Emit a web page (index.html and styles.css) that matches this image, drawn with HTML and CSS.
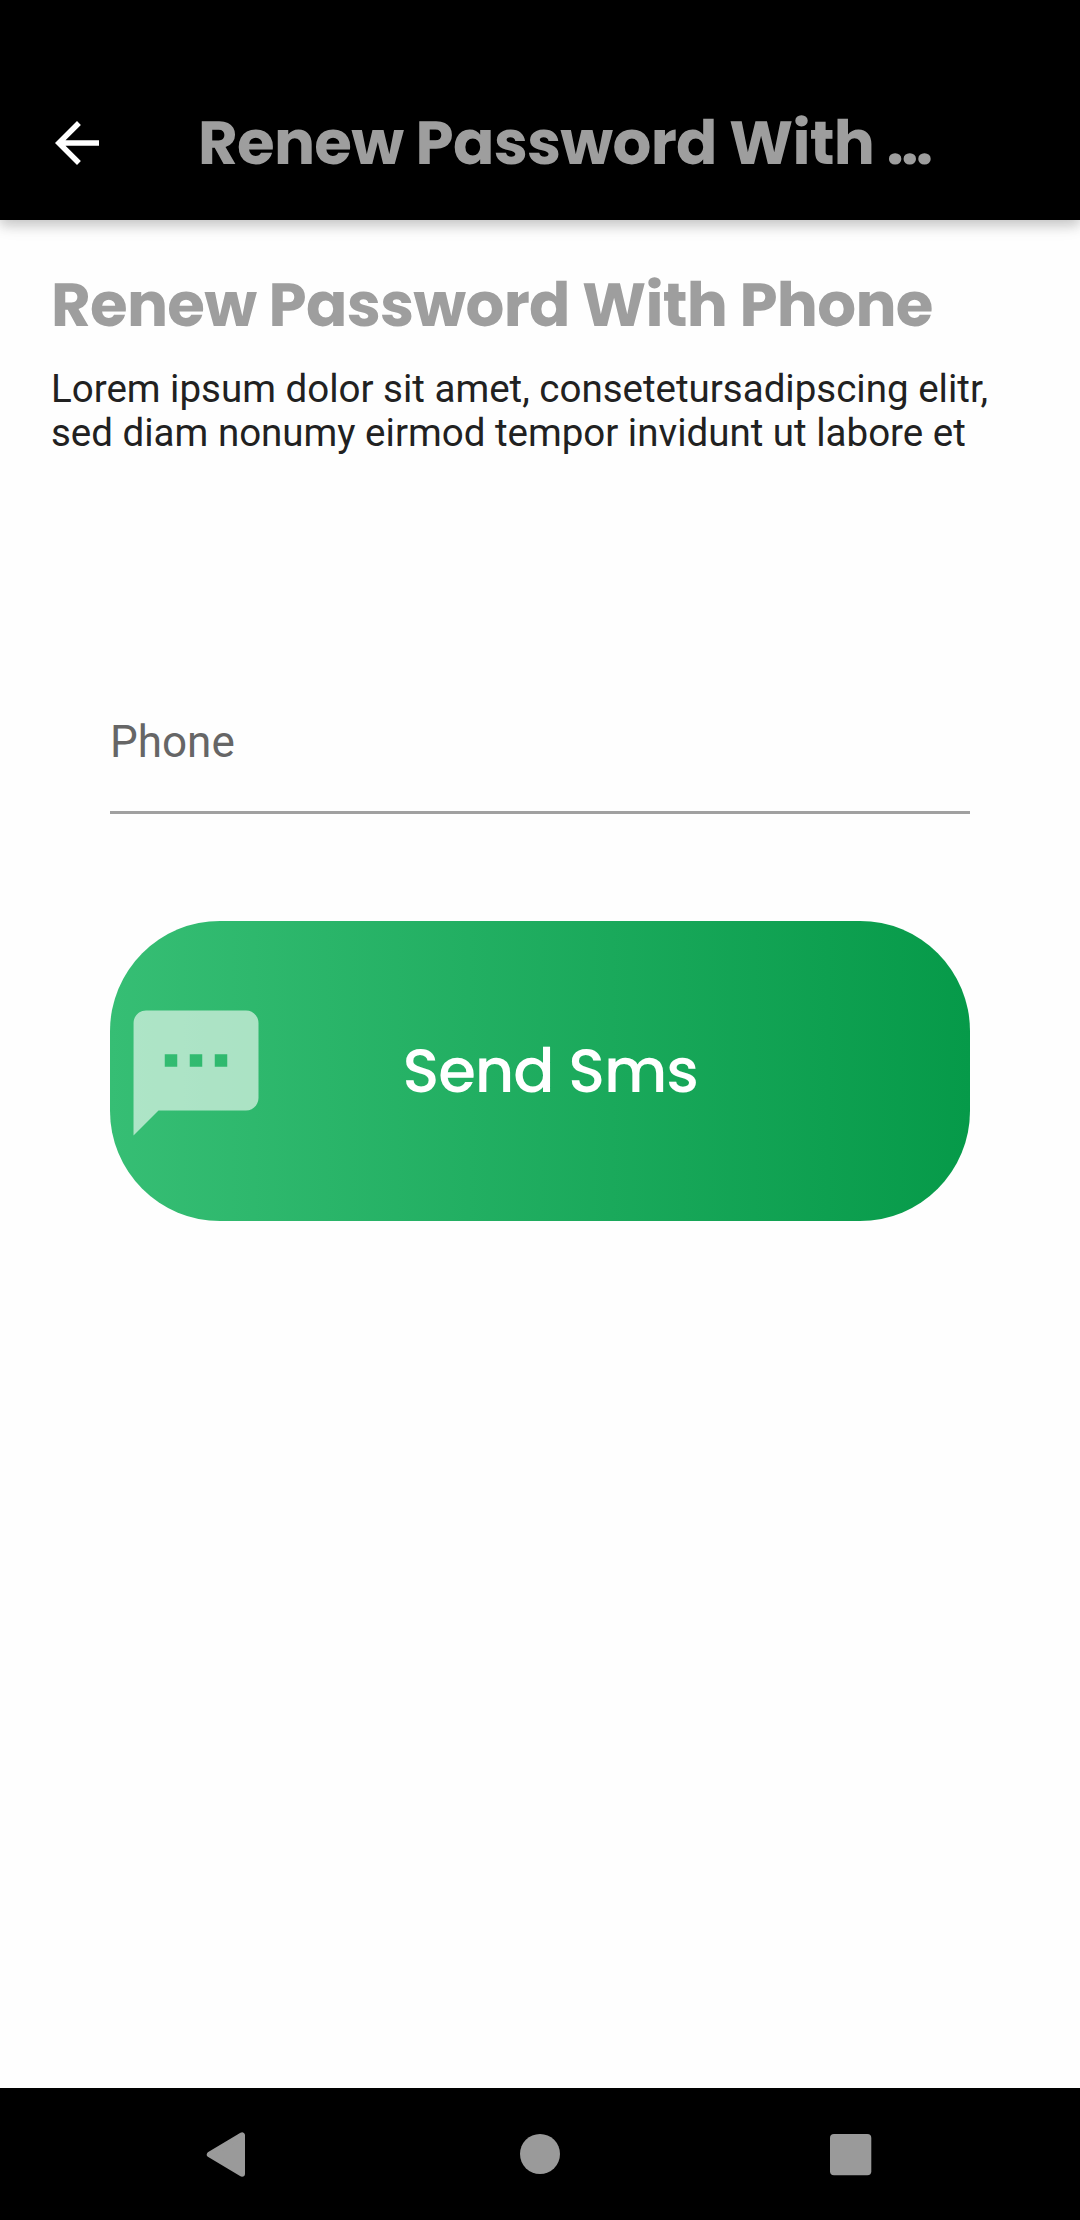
FILE: index.html
```html
<!DOCTYPE html>
<html lang="en">
<head>
<meta charset="utf-8">
<title>Renew Password With Phone</title>
<link rel="stylesheet" href="styles.css">
</head>
<body>
<div class="screen">
  <header class="app-bar">
    <svg class="back" viewBox="0 0 24 24" aria-label="Back"><path d="M20 11H7.83l5.59-5.59L12 4l-8 8 8 8 1.41-1.41L7.83 13H20v-2z"/></svg>
    <div class="bar-title">Renew Password With …</div>
  </header>
  <main class="content">
    <h1 class="heading">Renew Password With Phone</h1>
    <p class="intro">Lorem ipsum dolor sit amet, consetetursadipscing elitr,<br>sed diam nonumy eirmod tempor invidunt ut labore et</p>
    <div class="form">
      <div class="field">Phone</div>
      <div class="send">
        <svg class="sms" viewBox="0 0 24 24"><path d="M20 2H4c-1.1 0-1.99.9-1.99 2L2 22l4-4h14c1.1 0 2-.9 2-2V4c0-1.1-.9-2-2-2zM9 11H7V9h2v2zm4 0h-2V9h2v2zm4 0h-2V9h2v2z"/></svg>
        <span class="send-label">Send Sms</span>
      </div>
    </div>
  </main>
  <nav class="nav-bar">
    <svg class="key" viewBox="0 0 60 60"><path d="M9.8 30.5 42 11.3V49.7Z" stroke-width="6" stroke-linejoin="round"/></svg>
    <svg class="key" viewBox="0 0 60 60"><circle cx="30" cy="30" r="20"/></svg>
    <svg class="key" viewBox="0 0 60 60"><rect x="10" y="10" width="41.3" height="41.3" rx="4"/></svg>
  </nav>
</div>
</body>
</html>
```
FILE: styles.css
```css
* { box-sizing: border-box; }
body { margin: 0; background: #fefefe; font-family: Roboto, sans-serif; }
.screen { display: flex; flex-direction: column; width: 1080px; height: 2220px; overflow: hidden; }
.app-bar {
  display: flex; align-items: center; flex: none; height: 220px;
  padding: 66px 0 0 44px; background: #000;
  box-shadow: 0 6px 11px rgba(0, 0, 0, .16), 0 2px 20px rgba(0, 0, 0, .1);
}
.back { width: 66px; height: 66px; fill: #fff; }
.bar-title, .heading, .send-label {
  font-family: Poppins, Inter, sans-serif; font-size: 61px; line-height: 90px; letter-spacing: -.7px;
  white-space: nowrap; text-rendering: geometricPrecision;
}
.bar-title { margin: 2px 0 0 88px; font-weight: 700; color: #9e9e9e; }
.content { flex: 1; padding: 41px 51px 0; }
.heading { margin: 0; font-weight: 700; color: #9e9e9e; }
.intro { margin: 16px 0 0; font-size: 38.5px; line-height: 44px; color: #212121; white-space: nowrap; }
.form { margin: 260px 59px 0; }
.field { height: 99px; font-size: 44px; line-height: 55px; color: #666; border-bottom: 3px solid #a0a0a0; }
.send {
  display: flex; align-items: center; height: 299.7px; margin-top: 107.3px; padding: 4px 0 0 10.5px;
  border-radius: 110px; background: linear-gradient(90deg, #36be74, #069a49);
}
.sms { width: 150px; height: 150px; fill: #fff; fill-opacity: .6; }
.send-label { margin: -3px 0 0 132px; font-weight: 500; letter-spacing: -1.1px; color: #fff; }
.nav-bar { display: flex; flex: none; align-items: center; justify-content: space-between; height: 132px; padding: 0 200px; background: #000; }
.key { width: 60px; height: 60px; fill: #9a9a9a; }
.key path { stroke: #9a9a9a; }
```
